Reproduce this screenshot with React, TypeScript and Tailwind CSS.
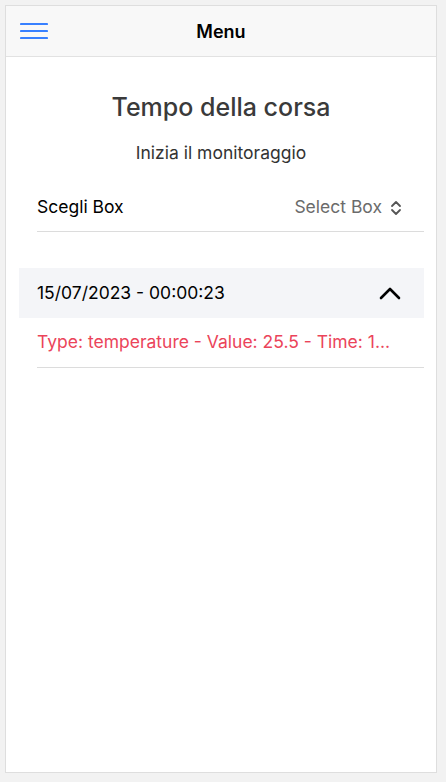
import React from 'react'

const font = { fontFamily: 'Inter, "Noto Sans", "Liberation Sans", sans-serif' }

function MenuIcon() {
  return (
    <svg width="28" height="18" viewBox="0 0 28 18" className="block">
      <path d="M1 2h26M1 9h26M1 16h26" stroke="#3880ff" strokeWidth="2.2" strokeLinecap="round" />
    </svg>
  )
}

function UpDownIcon() {
  return (
    <svg width="12" height="16" viewBox="0 0 12 16" className="block">
      <path d="M2 6l4-4 4 4M2 10l4 4 4-4" stroke="#555" strokeWidth="1.8" fill="none" strokeLinecap="round" strokeLinejoin="round" />
    </svg>
  )
}

function ChevronUpIcon() {
  return (
    <svg width="22" height="14" viewBox="0 0 22 14" className="block">
      <path d="M2 12l9-9 9 9" stroke="#000" strokeWidth="2.6" fill="none" strokeLinecap="round" strokeLinejoin="round" />
    </svg>
  )
}

export default function App() {
  return (
    <div className="min-h-[782px] bg-[#f2f2f2] p-[5px]" style={font}>
      <div className="flex h-[768px] w-[432px] flex-col border border-[#dedede] bg-white">
        {/* Toolbar */}
        <div className="relative flex h-[51px] items-center justify-center border-b border-[#e2e2e2] bg-[#f8f8f8]">
          <button className="absolute left-[14px] top-[16px]">
            <MenuIcon />
          </button>
          <span className="text-[18px] font-semibold text-black">Menu</span>
        </div>

        {/* Content */}
        <div className="flex flex-col">
          <h1 className="mt-[35px] text-center text-[25px] leading-[30px] font-medium text-[#3a3a3a]">
            Tempo della corsa
          </h1>
          <p className="mt-[20px] text-center text-[17.5px] leading-[22px] text-[#333]">
            Inizia il monitoraggio
          </p>

          <div className="mt-[20px] pl-[31px] pr-[12px]">
            <div className="flex h-[48px] items-center justify-between border-b border-[#dcdcdc] pr-[22px]">
              <span className="text-[17.5px] text-black">Scegli Box</span>
              <div className="flex items-center gap-[8px]">
                <span className="text-[17.5px] text-[#6b6b6b]">Select Box</span>
                <UpDownIcon />
              </div>
            </div>
          </div>

          <div className="mt-[36px] pl-[13px] pr-[12px]">
            <div className="flex h-[50px] items-center justify-between bg-[#f4f5f8] pl-[18px] pr-[23px]">
              <span className="text-[17.5px] text-black">15/07/2023 - 00:00:23</span>
              <ChevronUpIcon />
            </div>
            <div className="pl-[18px]">
              <div className="flex h-[50px] items-center border-b border-[#dcdcdc] pr-[20px]">
                <span className="whitespace-nowrap text-[17.5px] text-[#eb445a]">
                  Type: temperature - Value: 25.5 - Time: 1...
                </span>
              </div>
            </div>
          </div>
        </div>
      </div>
    </div>
  )
}
